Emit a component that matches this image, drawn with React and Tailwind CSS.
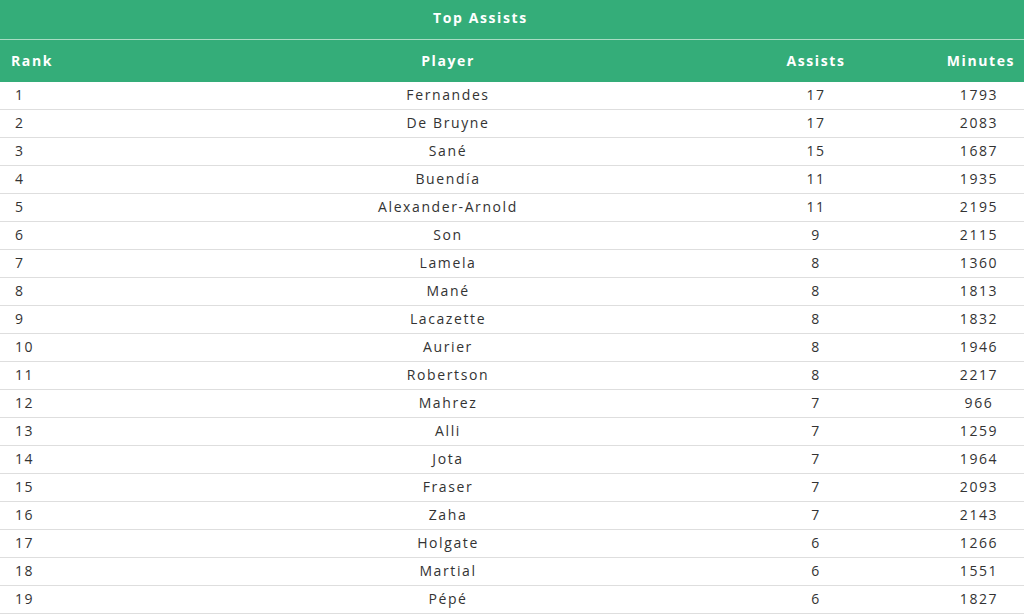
const rows = [
  [1, "Fernandes", 17, 1793],
  [2, "De Bruyne", 17, 2083],
  [3, "Sané", 15, 1687],
  [4, "Buendía", 11, 1935],
  [5, "Alexander-Arnold", 11, 2195],
  [6, "Son", 9, 2115],
  [7, "Lamela", 8, 1360],
  [8, "Mané", 8, 1813],
  [9, "Lacazette", 8, 1832],
  [10, "Aurier", 8, 1946],
  [11, "Robertson", 8, 2217],
  [12, "Mahrez", 7, 966],
  [13, "Alli", 7, 1259],
  [14, "Jota", 7, 1964],
  [15, "Fraser", 7, 2093],
  [16, "Zaha", 7, 2143],
  [17, "Holgate", 6, 1266],
  [18, "Martial", 6, 1551],
  [19, "Pépé", 6, 1827],
];

const App = () => {
  return (
    <div className="w-[1024px] h-[615px] overflow-hidden bg-white font-['Open_Sans',sans-serif] tracking-widest">
      {/* Title */}
      <div className="h-[39px] bg-[#34ad79] flex items-center pb-[5px] pl-[433px] text-white font-bold text-[14px]">
        Top Assists
      </div>
      <div className="h-px bg-[#a9dcc3]" />

      {/* Column headers */}
      <div className="h-[42px] bg-[#34ad79] grid grid-cols-[198px_500px_236px_90px] items-center pb-px text-white font-bold text-[14px]">
        <div className="pl-[11px]">Rank</div>
        <div className="text-center">Player</div>
        <div className="text-center">Assists</div>
        <div className="text-center pl-[4px]">Minutes</div>
      </div>

      {/* Rows */}
      {rows.map(([rank, name, assists, minutes]) => (
        <div
          key={rank}
          className="h-[28px] grid grid-cols-[198px_500px_236px_90px] items-center pb-[3px] border-b border-[#dedede] text-[#333] text-[14px] font-medium"
        >
          <div className="pl-[15px]">{rank}</div>
          <div className="text-center">{name}</div>
          <div className="text-center">{assists}</div>
          <div className="text-center">{minutes}</div>
        </div>
      ))}
    </div>
  );
};

export default App;
